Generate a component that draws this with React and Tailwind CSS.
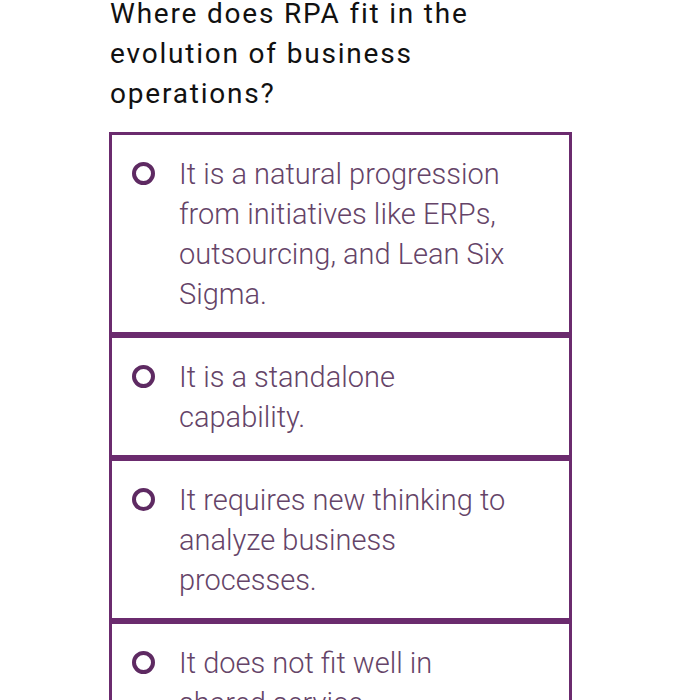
const options = [
  "It is a natural progression from initiatives like ERPs, outsourcing, and Lean Six Sigma.",
  "It is a standalone capability.",
  "It requires new thinking to analyze business processes.",
  "It does not fit well in shared service environments.",
];

function Radio() {
  return (
    <span className="mt-[8px] -ml-[1px] block h-[23px] w-[23px] shrink-0 rounded-full border-[4px] border-[#5e2a62]" />
  );
}

export default function App() {
  return (
    <div className="h-[700px] overflow-hidden bg-white font-['Roboto',sans-serif]">
      <div className="ml-[109px] w-[463px] -mt-[6px]">
        <h1 className="pl-[1px] text-[28px] leading-[40px] tracking-[1.8px] text-[#111]">
          Where does RPA fit in the
          <br />
          evolution of business
          <br />
          operations?
        </h1>

        <div className="mt-[18px]">
          {options.map((text) => (
            <label
              key={text}
              className="flex items-start border-[3px] border-[#6b2b6e] pt-[19px] pb-[18px] pl-[21px] pr-[55px]"
            >
              <Radio />
              <span className="ml-[24px] text-[29px] font-light leading-[40px] text-[#654468]">
                {text}
              </span>
            </label>
          ))}
        </div>
      </div>
    </div>
  );
}
